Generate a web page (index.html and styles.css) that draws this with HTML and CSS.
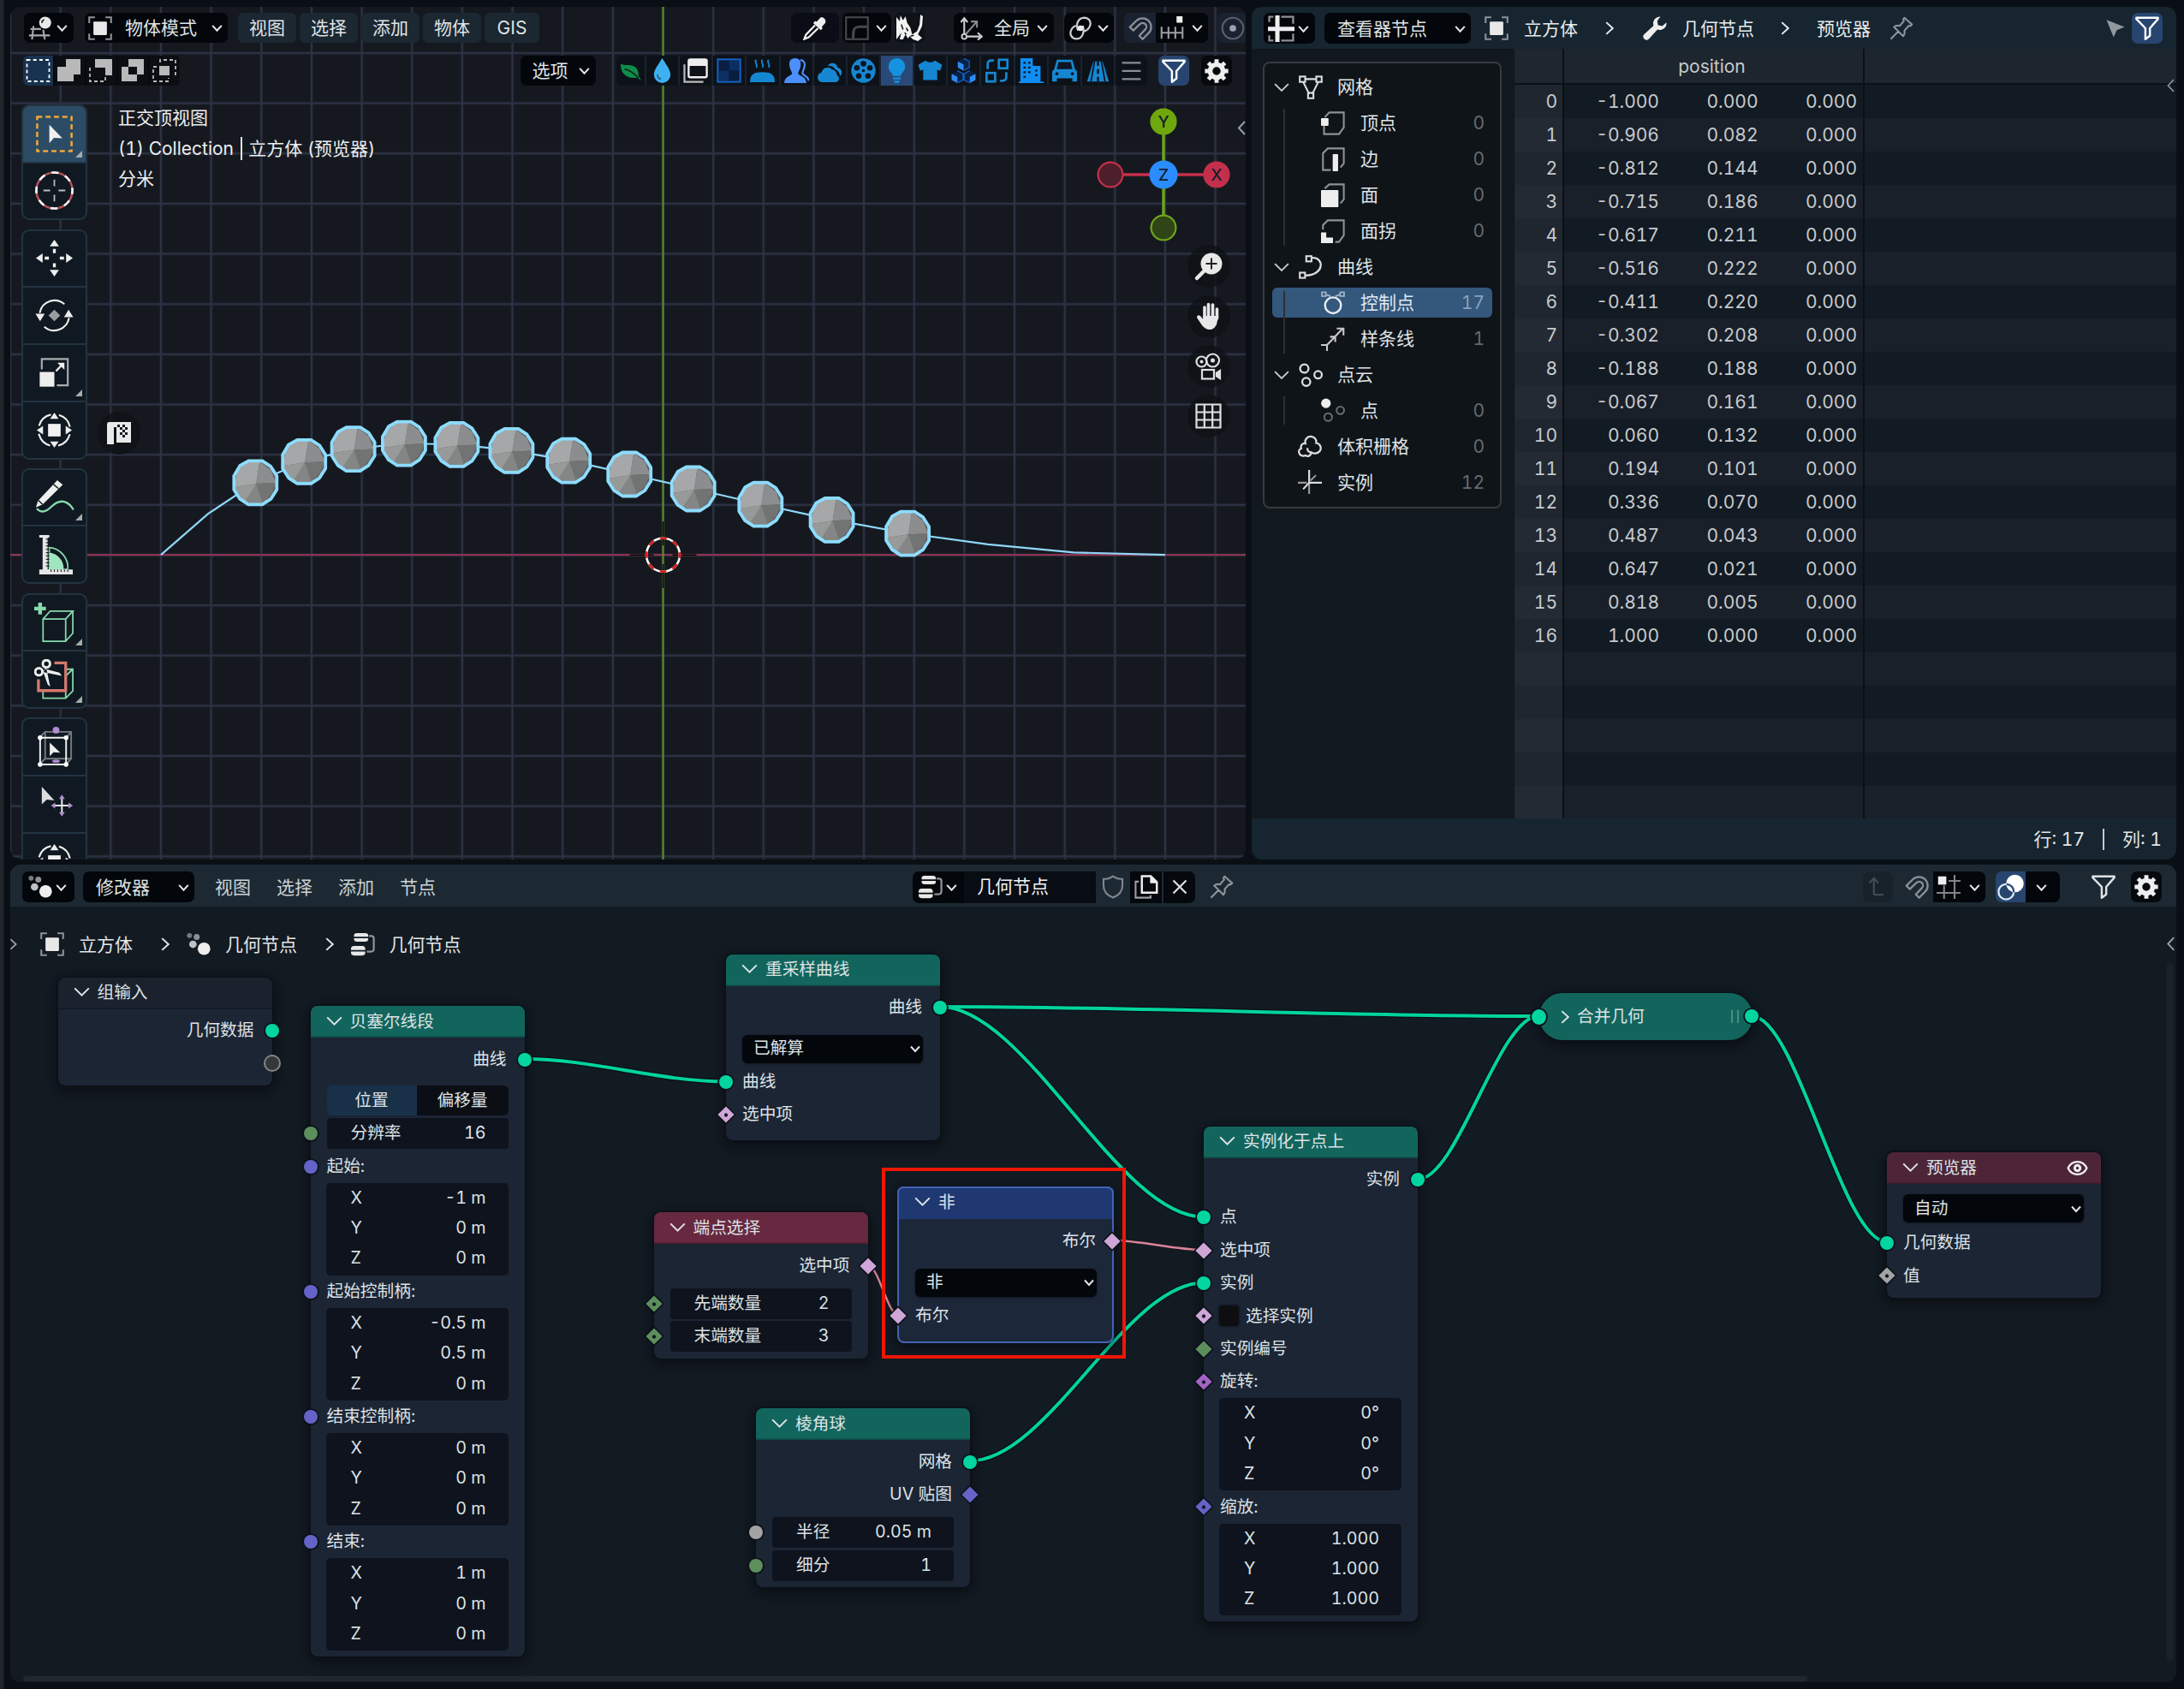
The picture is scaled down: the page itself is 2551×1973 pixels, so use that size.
FILE: index.html
```html
<!DOCTYPE html>
<html lang="zh-CN">
<head>
<meta charset="utf-8">
<title>几何节点</title>
<link rel="stylesheet" href="styles.css">
</head>
<body>
<svg class="defs" width="0" height="0">
  <defs>
    <symbol id="chev" viewBox="0 0 16 16"><path d="M3 5.500 8 11l5-5.500" fill="none" stroke="currentColor" stroke-width="2"/></symbol>
    <symbol id="chev-thin" viewBox="0 0 16 16"><path d="M1 4.500 8 11.500l7-7" fill="none" stroke="currentColor" stroke-width="1.700"/></symbol>
    <symbol id="sep" viewBox="0 0 16 16"><path d="M5 2.500 11 8l-6 5.500" fill="none" stroke="currentColor" stroke-width="1.600"/></symbol>
    <symbol id="obj" viewBox="0 0 16 16"><path d="M.7 4.500V.7h3.800M11.500.7h3.800v3.800M15.300 11.500v3.800h-3.800M4.500 15.300H.7v-3.800" fill="none" stroke="#8d9297" stroke-width="1.200"/><rect x="3.500" y="3.500" width="9" height="9" rx=".6" fill="#e8e8e8"/></symbol>
    <symbol id="ed3d" viewBox="0 0 16 16"><path d="M3.500 6.500 2.500 15.500M10 9l1 6.500M1.500 8.500h7M.5 12.800h14" fill="none" stroke="#a5a9ad" stroke-width="1.200"/><circle cx="11.300" cy="4.300" r="4" fill="#e8e8e8"/><path d="M9.200 4.500a2 2 0 0 1 1.500-2.200" stroke="#222" fill="none"/></symbol>
    <symbol id="edsheet" viewBox="0 0 16 16"><path d="M.8 4V.8h2.500M8 .8h7.200V5M.8 12v3.200h2.500M8 15.200h7.200V11" fill="none" stroke="#8d9297" stroke-width="1.200"/><path d="M4.400 0h2.600v6.800H16v2.600H7V16H4.400V9.400H0V6.800h4.400z" fill="#eee"/></symbol>
    <symbol id="geo" viewBox="0 0 16 16"><circle cx="1.900" cy="2.200" r="1.700" fill="#777b80"/><circle cx="6.700" cy="3.200" r="2" fill="#8d9196"/><circle cx="4.200" cy="8" r="2.500" fill="#bfc2c4"/><circle cx="11.600" cy="11" r="4.200" fill="#eee"/></symbol>
    <symbol id="tree" viewBox="0 0 16 16"><path d="M2 2.200C2 1 2.700.5 4 .5h5.500c1.300 0 2 .5 2 1.700v.8H2zM2 4h9.500v.6c0 1.200-.7 1.700-2 1.700H4c-1.300 0-2-.5-2-1.700z" fill="#e8e8e8"/><path d="M0 11c0-1.200.7-1.900 2-1.900h5.500c1.300 0 2 .7 2 1.900v.8H0zM0 12.800h9.500v.8c0 1.200-.7 1.900-2 1.900H2c-1.300 0-2-.7-2-1.900z" fill="#e8e8e8"/><path d="M12 2.500h1.500c1 0 1.700.6 1.700 1.700v7c0 1-.6 1.700-1.700 1.700H10.500" fill="none" stroke="#8d9297" stroke-width="1.300"/></symbol>
    <symbol id="wrench" viewBox="0 0 16 16"><path d="M11.700.3a4.500 4.500 0 0 0-4.600 6L.9 12a2.100 2.100 0 1 0 3.100 3.100l5.700-6.200a4.500 4.500 0 0 0 6-4.800L12.900 6.500 10 5.900 9.600 3z" fill="#eee"/></symbol>
    <symbol id="pin" viewBox="0 0 16 16"><path d="M10 1l5 4.500-1.200 1-.9-.2L10 9.500c.4 1.600.1 2.800-.9 3.800L3 7.200c1.100-1 2.300-1.200 3.800-.8L9.600 3.200 9.200 2zM5.800 10.200.8 15.300" fill="none" stroke="#8d949b" stroke-width="1.200" stroke-linejoin="round"/></symbol>
    <symbol id="funnel" viewBox="0 0 16 16"><path d="M.8 1h14.400v.8L9.800 8v5l-3 2.300V8L.8 1.800z" fill="none" stroke="currentColor" stroke-width="1.400" stroke-linejoin="round"/></symbol>
    <symbol id="gear" viewBox="0 0 16 16"><circle cx="8" cy="8" r="4.300" fill="none" stroke="#eee" stroke-width="3.200"/><g stroke="#eee" stroke-width="2.800"><path d="M8 .2v3M8 12.800v3M.2 8h3M12.800 8h3M2.500 2.500l2.100 2.100M11.400 11.400l2.100 2.100M2.500 13.500l2.100-2.100M11.400 4.600l2.100-2.100"/></g></symbol>
    <symbol id="magnet" viewBox="0 0 16 16"><path d="M1 7.200 5.300 3a5.700 5.700 0 0 1 8.200 8.200L9.500 15.300 7.300 13l4-4.200A2.400 2.400 0 0 0 7.700 5.200L3.300 9.500z" fill="none" stroke="#8a9097" stroke-width="1.300" stroke-linejoin="round"/></symbol>
    <symbol id="axes" viewBox="0 0 16 16"><path d="M3 12V1.500M.8 4 3 1.200 5.200 4M4.500 13.500H14M12 11l2.700 2.500L12 15.800" fill="none" stroke="#ccc" stroke-width="1.200"/><path d="M4 12l7.500-8.500M7.500 3.500h4v4" fill="none" stroke="#85898d" stroke-width="1.200"/><circle cx="3" cy="13.500" r="1.600" fill="none" stroke="#ccc" stroke-width="1.100"/></symbol>
    <symbol id="pivot" viewBox="0 0 16 16"><path d="M6.500 9.500C4.500 5.500 6.500 1 10.500.9 14 1 15.300 4 14.300 6.500 13.500 8.500 12 9.800 10 10M9.500 6.300C11 10 9.500 15 5.500 15.100 2 15 .7 12 1.700 9.500 2.300 8 3.300 6.800 5 6.300" fill="none" stroke="#ccc" stroke-width="1.300"/><circle cx="8" cy="8" r="1.900" fill="#eee"/></symbol>
    <symbol id="snapinc" viewBox="0 0 16 16"><path d="M1 7v8M5.600 7v8M10.200 7v8M15 7v8M1 11h14" stroke="#9a9ea2" stroke-width="1.200" fill="none"/><rect x="11" y="0" width="4" height="4.300" fill="#eee"/></symbol>
    <symbol id="snapgrid" viewBox="0 0 16 16"><path d="M5 7v9M12 0v16M0 12h16M8 4h8" stroke="#80858a" stroke-width="1.200" fill="none"/><rect x="1" y="1" width="5.500" height="5.500" fill="#eee"/></symbol>
    <symbol id="prop" viewBox="0 0 16 16"><circle cx="8" cy="8" r="7" fill="none" stroke="#59616d" stroke-width="1.200"/><circle cx="8" cy="8" r="2.200" fill="#9aa2b0"/></symbol>
    <symbol id="dropper" viewBox="0 0 16 16"><path d="M11 1.500c1.500-2 5 .5 3.800 3L12.500 7l.6 1-1.300 1.300L6.800 4.500 8 3.200l1 .5z" fill="#eee"/><path d="M8 6 2 12.200.8 15.200l3-1.200L10 8" fill="none" stroke="#eee" stroke-width="1.300"/></symbol>
    <symbol id="falloff" viewBox="0 0 16 16"><rect x=".7" y=".7" width="14.600" height="14.600" fill="none" stroke="#45494d" stroke-width="1.200"/><path d="M5.500 15V12c0-4 1.500-5 4-5H15" fill="none" stroke="#45494d" stroke-width="1.800"/></symbol>
    <symbol id="rhino" viewBox="0 0 16 16"><path d="M0 1.500 2 4 2.500.5l1.500 3L5.500 1l1 4 2 3 1 4 3-2 1.500-4L14.500 0 16 1l-.5 6-2.500 5 2.500 2-2.500 2-3-1-2-2-1 1.500L5.500 12 4 15H2l1-4-3 4z" fill="#f2f2f2"/><path d="M3 6l1 3M6 8l1 2M8.500 13l2-.5M5 11l1 1" stroke="#111" stroke-width=".8"/></symbol>
    <symbol id="shield" viewBox="0 0 16 16"><path d="M8 .9c1.800 1.300 3.900 1.900 6.300 1.900v4.400c0 4-2.300 6.500-6.300 8-4-1.500-6.300-4-6.300-8V2.800C4.100 2.800 6.200 2.200 8 .9z" fill="none" stroke="#7f868e" stroke-width="1.200"/></symbol>
    <symbol id="copy" viewBox="0 0 16 16"><path d="M5 .8h6l4 4v7H5z" fill="none" stroke="#eee" stroke-width="1.400"/><path d="M10.500.5v5H15.500z" fill="#eee"/><path d="M3 4.500H.8v10.700h10V13.500" fill="none" stroke="#9a9ea2" stroke-width="1.200"/></symbol>
    <symbol id="cross" viewBox="0 0 16 16"><path d="M3 3l10 10M13 3 3 13" stroke="#ddd" stroke-width="1.500"/></symbol>
    <symbol id="parent" viewBox="0 0 16 16"><path d="M4.500 1.500V12.500c0 1 .5 1.700 1.700 1.700H12M1 5l3.500-3.800L8 5" fill="none" stroke="#434e58" stroke-width="1.400"/></symbol>
    <symbol id="overlay" viewBox="0 0 16 16"><circle cx="10.600" cy="5.700" r="5.300" fill="#fff"/><circle cx="5.300" cy="10.700" r="4.600" fill="none" stroke="#dfe8f5" stroke-width="1.200"/><path d="M5.600 6.100a4.600 4.600 0 0 1 4.300 4.900" fill="none" stroke="#274a7a" stroke-width="1.200"/></symbol>
    <symbol id="cursor" viewBox="0 0 16 16"><path d="M1 1.500 15 7 9 9.500 6.500 15z" fill="#8f989f"/></symbol>
    <symbol id="mesh" viewBox="0 0 16 16"><path d="M3 4.500 7 12.500M13 4.500 9 12.500M4 2.500h8" fill="none" stroke="#ddd" stroke-width="1.200"/><rect x=".7" y=".8" width="3.600" height="3.600" fill="none" stroke="#ddd" stroke-width="1.200"/><rect x="11.700" y=".8" width="3.600" height="3.600" fill="none" stroke="#ddd" stroke-width="1.200"/><rect x="6.200" y="11.700" width="3.600" height="3.600" fill="none" stroke="#ddd" stroke-width="1.200"/></symbol>
    <symbol id="vert" viewBox="0 0 16 16"><path d="M2.500 4 5.500.8h9.700v10L12 15.200H2V9.500" fill="none" stroke="#8d9195" stroke-width="1.200"/><rect x="0" y="4.500" width="5" height="5.200" rx=".5" fill="#eee"/></symbol>
    <symbol id="edge" viewBox="0 0 16 16"><path d="M6.500 15.200H1.300V4L4.500.8h10.700v10L13 13.500" fill="none" stroke="#8d9195" stroke-width="1.200"/><rect x="7.800" y="4.500" width="3.600" height="11.500" rx=".5" fill="#eee"/></symbol>
    <symbol id="face" viewBox="0 0 16 16"><path d="M2.500 3.500 5.500.8h9.700v10L13 13.500" fill="none" stroke="#8d9195" stroke-width="1.200"/><rect x="0" y="4.500" width="11.600" height="11.500" rx=".6" fill="#eee"/></symbol>
    <symbol id="corner" viewBox="0 0 16 16"><path d="M1.300 7V4L4.500.8h10.700v10L12 15.200H9.500" fill="none" stroke="#8d9195" stroke-width="1.200"/><path d="M0 8.800h3.500v3.500H8V16H0z" fill="#eee"/></symbol>
    <symbol id="curve" viewBox="0 0 16 16"><path d="M9 1.800c8-.5 8.500 11.500-4.500 11.800" fill="none" stroke="#ddd" stroke-width="1.300"/><rect x="5" y=".7" width="3.500" height="3.500" fill="none" stroke="#ddd" stroke-width="1.200"/><rect x=".7" y="11.700" width="3.500" height="3.500" fill="none" stroke="#ddd" stroke-width="1.200"/></symbol>
    <symbol id="cpoint" viewBox="0 0 16 16"><circle cx="8" cy="9.500" r="5.300" fill="none" stroke="#e6ecf2" stroke-width="1.400"/><path d="M3 2.300 6.500 3.500M13 2.300 9.500 3.500" stroke="#9fb3c7" stroke-width="1.200"/><rect x=".6" y=".8" width="2.600" height="2.600" fill="none" stroke="#9fb3c7"/><rect x="12.800" y=".8" width="2.600" height="2.600" fill="none" stroke="#9fb3c7"/></symbol>
    <symbol id="spline" viewBox="0 0 16 16"><path d="M4 12 14.500 1M10.500 1h4.500v4.500M4 16v-4H0M9.500 10V6.500H6" fill="none" stroke="#c8c8c8" stroke-width="1.200"/></symbol>
    <symbol id="cloud3" viewBox="0 0 16 16"><g fill="none" stroke="#ddd" stroke-width="1.300"><circle cx="3.700" cy="3.700" r="2.800"/><circle cx="12.900" cy="7.900" r="2.500"/><circle cx="5" cy="12.600" r="2.700"/></g></symbol>
    <symbol id="point1" viewBox="0 0 16 16"><circle cx="3.300" cy="3.500" r="3.200" fill="#eee"/><g fill="none" stroke="#666b70" stroke-width="1.200"><circle cx="12.900" cy="8.200" r="2.500"/><circle cx="4.800" cy="12.700" r="2.600"/></g></symbol>
    <symbol id="volume" viewBox="0 0 16 16"><path d="M5 6.300A3.700 3.700 0 1 1 12.200 6c3 .5 3.800 3.500 2.300 5.500-1.500 1.700-4 1.800-5.500.8-.5 2.200-2 3-4 2-1.800.7-3.800 0-4.200-1.700-.4-1.500.3-2.700 1.400-3C1.500 7.500 3.200 6 5 6.300zM9 12.300c-2-.3-3-1.500-2.500-3" fill="none" stroke="#ddd" stroke-width="1.300"/></symbol>
    <symbol id="inst" viewBox="0 0 16 16"><path d="M7.500 0v16M0 8.500h6" stroke="#999" stroke-width="1.200" fill="none"/><path d="M7.500 0v8.500H16M3.500 12.800l4-4.300" stroke="#ddd" stroke-width="1.200" fill="none"/><path d="M8.500 7 12 3.500" stroke="#999" stroke-width="1.200"/></symbol>

    <symbol id="leaf" viewBox="0 0 16 16"><path d="M0 2.500c4 2 10-1 13 4.500 1 2 .5 3 1 5l2 3.500-3-2.500C8 14.500-.5 12 0 2.500z" fill="#0d8f47"/><path d="M3 6.500c4 .5 7 3 10.500 6.500" stroke="#11181e" fill="none"/></symbol>
    <symbol id="drop" viewBox="0 0 16 16"><path d="M8 0c3 4.800 5.300 7.500 5.300 10.600A5.300 5.300 0 0 1 8 16a5.300 5.300 0 0 1-5.300-5.400C2.700 7.500 5 4.800 8 0z" fill="#3fb0f2"/><path d="M5 10.500c0 1.800 1 2.800 2.200 3" fill="none" stroke="#1a5f8c"/></symbol>
    <symbol id="window" viewBox="0 0 16 16"><rect x="3.500" y=".8" width="11.700" height="11.500" rx="1" fill="none" stroke="#eee" stroke-width="1.300"/><path d="M3.500 1h11.700v4H3.500z" fill="#eee"/><path d="M.8 4v11.200H13" fill="none" stroke="#bbb" stroke-width="1.200"/></symbol>
    <symbol id="checker" viewBox="0 0 16 16"><rect x=".8" y=".8" width="14.400" height="14.400" fill="#06122b" stroke="#1463c4" stroke-width="1.200"/><path d="M1.500 1.500H8V8H1.500zM8 8h6.500v6.500H8z" fill="#0a1d42"/><path d="M8 1.500h6.500V8H8zM1.500 8H8v6.500H1.500z" fill="#0c2f63"/></symbol>
    <symbol id="steam" viewBox="0 0 16 16"><path d="M0 15.500c0-5 2.500-6.500 8-6.500s8 1.500 8 6.500z" fill="#1587d2"/><path d="M4 1c-1.500 2 1.500 3 0 5M8 1c-1.500 2 1.500 3 0 5M12 1c-1.500 2 1.500 3 0 5" fill="none" stroke="#1587d2" stroke-width="1"/></symbol>
    <symbol id="people" viewBox="0 0 16 16"><path d="M7 0c3 0 4 2 3.600 5C10.200 7.500 9 8.500 9 10c1 1.500 5 1.500 5.300 6H0C.3 11.500 4 11.500 5 10 5 8.500 3.800 7.500 3.400 5 3 2 4 0 7 0z" fill="#4b90fa"/><path d="M10.500 1c2.500.5 3 2.500 2.500 4.500-.3 2-1.300 3-1.200 4.300.7 1.500 3.700 2 4 4.700" fill="none" stroke="#4b90fa" stroke-width="1.200"/></symbol>
    <symbol id="clouds" viewBox="0 0 16 16"><path d="M3 15.500a3.200 3.200 0 0 1-.5-6.300A4 4 0 0 1 9 7a4.500 4.500 0 0 1 3.500 4c2 .8 1.500 4-.5 4.500z" fill="#1587d2"/><path d="M6.500 4.800C8 2.200 12.300 2.600 13 6c2.500.5 3.500 3.500 1.500 5.500-.5-2.500-1.500-3.500-3-4.300C10.500 5.500 8.500 4.700 6.500 4.800z" fill="#1587d2"/></symbol>
    <symbol id="reel" viewBox="0 0 16 16"><circle cx="8" cy="8" r="7.800" fill="#1587d2"/><g fill="#0d1622"><circle cx="8" cy="3.500" r="1.900"/><circle cx="12.200" cy="6.200" r="1.800"/><circle cx="11" cy="11.500" r="1.800"/><circle cx="5" cy="11.500" r="1.800"/><circle cx="3.800" cy="6.200" r="1.800"/><circle cx="8" cy="8" r="1"/></g></symbol>
    <symbol id="bulb" viewBox="0 0 16 16"><path d="M8 0a5.400 5.400 0 0 1 5.400 5.500c0 2.800-2.400 3.500-2.900 6h-5C5 9 2.600 8.300 2.600 5.500A5.400 5.400 0 0 1 8 0zM5.500 12.400h5v1.200h-5zM6 14.500h4l-1 1.500H7z" fill="#1593e0"/></symbol>
    <symbol id="shirt" viewBox="0 0 16 16"><path d="M5 1.500c1.500 1.500 4.500 1.500 6 0l4.700 2.800L14.500 8l-2-.5V14h-9V7.500l-2 .5L.3 4.300z" fill="#1587d2"/></symbol>
    <symbol id="cubes" viewBox="0 0 16 16"><path d="M8 0l3.700 2v4L8 8 4.300 6V2zM4 8l3.700 2v4L4 16 .3 14v-4zM12 8l3.700 2v4L12 16l-3.700-2v-4z" fill="#0a2146"/><path d="M4.300 2 8 4v4L4.300 6zM.3 10 4 12v4L.3 14zM15.700 10 12 12v4l3.700-2z" fill="#2b8cf0"/><path d="M8 0l3.700 2v4L8 8M4 8l3.700 2v4L4 16M12 8 8.300 10v4L12 16" fill="none" stroke="#1463c4" stroke-width=".7"/></symbol>
    <symbol id="swap" viewBox="0 0 16 16"><g fill="none" stroke="#1587d2" stroke-width="1.500"><rect x="9.200" y="1" width="5.500" height="5.500"/><rect x="1.300" y="9.500" width="5.500" height="5.500"/><path d="M2 7V4c0-1.500 1-2.500 2.500-2.500H6M14 9v3c0 1.500-1 2.500-2.500 2.500H10"/></g></symbol>
    <symbol id="build" viewBox="0 0 16 16"><path d="M0 16v-1h1V0h8v5h5v10h2v1z" fill="#0e8df2"/><path d="M3 3h1.500M6 3h1.500M3 6h1.500M6 6h1.500M3 9h1.500M6 9h1.500M3 12h1.500M10.500 8H12M10.500 11H12" stroke="#0d1622" stroke-width="1.200"/></symbol>
    <symbol id="car" viewBox="0 0 16 16"><path d="M3 1h10l1.700 6 1.300 1.500V15h-3v-2H3v2H0V8.500L1.300 7z" fill="#1587d2"/><path d="M4 2.500h8L13 7H3z" fill="#0d1622"/><circle cx="3" cy="10" r="1" fill="#0d1622"/><circle cx="13" cy="10" r="1" fill="#0d1622"/></symbol>
    <symbol id="road" viewBox="0 0 16 16"><path d="M5 2h6l4 13H1z" fill="#1587d2"/><path d="M5.800 2 3.500 15M10.200 2l2.300 13" stroke="#0d1622" stroke-width="1"/><path d="M8 2v3M8 7v3M8 12v3" stroke="#0d1622" stroke-width="1.400"/></symbol>
    <symbol id="lines" viewBox="0 0 16 16"><path d="M2 3h12M2 8.200h12M2 13.400h12" stroke="#888e94" stroke-width="1.200"/></symbol>

    <symbol id="t-sel" viewBox="0 0 48 48"><rect x="3.500" y="3.500" width="41" height="41" fill="none" stroke="#f0a83a" stroke-width="2.600" stroke-dasharray="6 4"/><path d="M18 13v22l5.500-6.500 10 .5z" fill="#f0f0f0"/></symbol>
    <symbol id="t-cur" viewBox="0 0 48 48"><circle cx="24" cy="24" r="21.500" fill="none" stroke="#b5525c" stroke-width="2.600"/><circle cx="24" cy="24" r="21.500" fill="none" stroke="#fff" stroke-width="2.600" stroke-dasharray="8.440 8.440" stroke-dashoffset="4"/><path d="M24 11v8M24 29v8M11 24h8M29 24h8" stroke="#b9bec2" stroke-width="1.800"/></symbol>
    <symbol id="t-move" viewBox="0 0 48 48"><path d="M24 2l5.500 8h-11zM24 46l5.500-8h-11zM2 24l8-5.500v11zM46 24l-8-5.500v11z" fill="#eee"/><path d="M24 13v5M24 30v5M12.500 24h5M30.500 24h5" stroke="#eee" stroke-width="3.400"/></symbol>
    <symbol id="t-rot" viewBox="0 0 48 48"><path d="M6.500 21A18 18 0 0 1 36 10.500M41.500 27A18 18 0 0 1 12 37.500" fill="none" stroke="#eee" stroke-width="2.200"/><path d="M1.500 22h11L7 31zM46.500 26h-11L41 17z" fill="#eee"/><path d="M24 17l7 7-7 7-7-7z" fill="#999da1"/></symbol>
    <symbol id="t-scale" viewBox="0 0 48 48"><path d="M9 20V7.500h31V39H27" fill="none" stroke="#a9adb1" stroke-width="2.200"/><rect x="6.500" y="23" width="17.500" height="17.500" fill="#eee"/><path d="M26 22l6.500-7" stroke="#eee" stroke-width="2.400"/><path d="M27.500 12h8.500v8.500z" fill="#eee"/></symbol>
    <symbol id="t-xform" viewBox="0 0 48 48"><circle cx="24" cy="24" r="19" fill="none" stroke="#eee" stroke-width="2.200" stroke-dasharray="20 9.850" stroke-dashoffset="-5"/><path d="M24 3l5 7.500H19zM24 45l5-7.500H19zM3 24l7.500-5v10zM45 24l-7.500-5v10z" fill="#eee"/><rect x="16.500" y="16.500" width="15" height="15" fill="#f2f2f2"/></symbol>
    <symbol id="t-anno" viewBox="0 0 48 48"><path d="M3 37c6 6 12 3 17-2s12-9 19-5 6 7 8 8" fill="none" stroke="#86d9ac" stroke-width="2.400"/><path d="M27.500 3 34 8.500 10 32 2 35.500 4.500 27.500z" fill="#eee"/><path d="M23 8l6 5M5 27l5 5" stroke="#101a20" stroke-width="1.500"/></symbol>
    <symbol id="t-meas" viewBox="0 0 48 48"><path d="M18 16a24 24 0 0 1 22 26H18z" fill="none" stroke="#86d9ac" stroke-width="1.800"/><path d="M18 22a19 19 0 0 1 17 20H18z" fill="#9fe6be"/><path d="M6 1h12v3h-2v41h-6V4H6z M6 42h40v6H6z" fill="#e6e6e6"/><path d="M14 6h4M14 10h4M14 14h4M14 18h4M14 22h4M14 26h4M14 30h4M14 34h4M14 38h4M20 42v3M24 42v3M28 42v3M32 42v3M36 42v3M40 42v3" stroke="#222" stroke-width="1.200"/></symbol>
    <symbol id="t-add" viewBox="0 0 48 48"><path d="M0 8h14M7 1v14" stroke="#86d9ac" stroke-width="4.500"/><path d="M10.500 20.500h27V47h-27zM10.500 20.500 19 11h27L37.500 20.500M46 11v26.500L37.500 47" fill="none" stroke="#86d9ac" stroke-width="1.800"/></symbol>
    <symbol id="t-cut" viewBox="0 0 48 48"><path d="M38 12h8v26l-8.500 8.500h-27V38M37.500 46.500V20L46 12" fill="none" stroke="#86d9ac" stroke-width="1.800"/><path d="M24 4.500h13.500v33H5V24" fill="none" stroke="#d4786c" stroke-width="3.400"/><g fill="none" stroke="#eee" stroke-width="3"><circle cx="14.500" cy="5.500" r="4.300"/><circle cx="5.500" cy="15" r="4.300"/></g><path d="M14 9l5 24-3-3-5-14zM9 15l24 5-3-4-16-4z" fill="#eee"/></symbol>
    <symbol id="t-cage" viewBox="0 0 48 48"><path d="M13 6h31v32H13zM6 13l7-7M38 13l6-7M38 45l6-7M6 45l7-7" fill="none" stroke="#74797f" stroke-width="2"/><path d="M7 13h31v32H7z" fill="none" stroke="#f0f0f0" stroke-width="2"/><g fill="#fff"><circle cx="7" cy="13" r="2.800"/><circle cx="38" cy="13" r="2.800"/><circle cx="7" cy="45" r="2.800"/><circle cx="38" cy="45" r="2.800"/></g><circle cx="26" cy="4" r="4" fill="#b08bd0"/><ellipse cx="26" cy="41" rx="4.500" ry="2" fill="#b08bd0"/><path d="M18.500 19v16l4.500-4.500 8 .5z" fill="#eee"/></symbol>
    <symbol id="t-tweak" viewBox="0 0 48 48"><path d="M9 3v21l6-5.500 9 1z" fill="#ddd"/><path d="M33 17v17M24.500 25.500h17" stroke="#eee" stroke-width="2"/><path d="M33 12.500l3.500 5h-7zM33 38.500l3.500-5h-7zM20 25.500l5-3.500v7zM46 25.500l-5-3.500v7z" fill="#b08bd0"/></symbol>

    <symbol id="ball" viewBox="-28 -28 56 56">
      <path d="M-25-8-18-20-8-25.500 8-25.500 18-19 25-8 25 8 18 19 8 25.500-8 25.500-18 19-25 8z" fill="#5b5b5b"/>
      <path d="M5-25-11-24-21-15-25 5 1 1z" fill="#a5a7a8"/>
      <path d="M5-25 18-15 24 0 1 1z" fill="#8c8d8e"/>
      <path d="M24 0 19 13 9 24 1 1z" fill="#727373"/>
      <path d="M-25 5-16 19-10 23 1 1z" fill="#989a9a"/>
      <path d="M-12 21-4 25 9 24 1 1z" fill="#848685"/>
      <path d="M-25-8-18-20-8-25.500 8-25.500 18-19 25-8 25 8 18 19 8 25.500-8 25.500-18 19-25 8z" fill="none" stroke="#8ddcff" stroke-width="3.800" stroke-linejoin="round"/>
    </symbol>
    <pattern id="grid" x="12.030" y="3.300" width="58.650" height="58.650" patternUnits="userSpaceOnUse"><path d="M0 .1V58.650M0 .1H58.650M58.650 0V58.650M0 58.650H58.650" stroke="#2c3144" stroke-width="2.400" fill="none"/></pattern>
  </defs>
</svg>

<main class="app">
  <section class="panel viewport">
    <svg class="scene" viewBox="12 8 1443 996">
      <rect x="12" y="8" width="1443" height="996" fill="url(#grid)"/>
      <path d="M12 648.200H1455" stroke="#8c3450" stroke-width="2.200"/>
      <path d="M774.500 8V1004" stroke="#5c8a2c" stroke-width="2.200"/>
      <path d="M188 648.200 243.100 600.100 298.300 563.700 355.200 539.100 412.600 524.400 471.900 518 533.400 519.200 597.400 526.200 664.200 537.900 735.200 553.800 809.700 570.800 888.300 589 971.600 607.100 1060.100 623 1154 635.900 1254.300 645.300 1361 648.200" fill="none" stroke="#8fd8fa" stroke-width="2.200"/>
      <g>
        <use href="#ball" x="270.300" y="535.900" width="56" height="56"/>
        <use href="#ball" x="327.200" y="511.300" width="56" height="56"/>
        <use href="#ball" x="384.600" y="496.600" width="56" height="56"/>
        <use href="#ball" x="443.900" y="490.200" width="56" height="56"/>
        <use href="#ball" x="505.400" y="491.400" width="56" height="56"/>
        <use href="#ball" x="569.400" y="498.400" width="56" height="56"/>
        <use href="#ball" x="636.200" y="510.100" width="56" height="56"/>
        <use href="#ball" x="707.200" y="526" width="56" height="56"/>
        <use href="#ball" x="781.700" y="543" width="56" height="56"/>
        <use href="#ball" x="860.300" y="561.200" width="56" height="56"/>
        <use href="#ball" x="943.600" y="579.300" width="56" height="56"/>
        <use href="#ball" x="1032.100" y="595.200" width="56" height="56"/>
      </g>
      <path d="M774.500 609v28M774.500 659v28M735.500 648.200h28M785.500 648.200h28" stroke="#050505" stroke-width="1.600"/>
      <circle cx="774.500" cy="648.200" r="19.500" fill="none" stroke="#fff" stroke-width="2.600"/>
      <circle cx="774.500" cy="648.200" r="19.500" fill="none" stroke="#e01818" stroke-width="2.600" stroke-dasharray="7.660 7.660" stroke-dashoffset="4"/>
      <g stroke-width="3.400">
        <path d="M1359 142V266" stroke="#6fa51a"/>
        <path d="M1297 204H1421" stroke="#c42f4b"/>
        <circle cx="1297" cy="204" r="14.400" fill="#4c1f2a" stroke="#c42f4b" stroke-width="2.200"/>
        <circle cx="1359" cy="266" r="14.400" fill="#304517" stroke="#6fa51a" stroke-width="2.200"/>
        <circle cx="1359" cy="142" r="15.600" fill="#6fa80c"/>
        <circle cx="1421" cy="204" r="15.600" fill="#c42f4b"/>
        <circle cx="1359" cy="204" r="16.600" fill="#2b8cff"/>
      </g>
      <g class="axis"><text x="1359" y="149">Y</text><text x="1359" y="211">Z</text><text x="1421" y="211">X</text></g>
      <path d="M1454 142 1447 149.500 1454 157" fill="none" stroke="#9a9fa4" stroke-width="2"/>
      <g fill="#0d1015" opacity=".75"><circle cx="1412" cy="311" r="25"/><circle cx="1412" cy="370" r="25"/><circle cx="1412" cy="428" r="25"/><circle cx="1412" cy="486" r="25"/><circle cx="139" cy="506" r="25"/></g>
      <circle cx="1415" cy="308" r="12.500" fill="#e8e8e8"/><path d="M1406 317 1398 325" stroke="#e8e8e8" stroke-width="4.500" stroke-linecap="round"/><path d="M1415 301.500v13M1408.500 308h13" stroke="#222" stroke-width="2"/>
      <path d="M1407 372V359M1411.500 370V355.500M1416.500 370V356M1421.500 372V361" stroke="#e8e8e8" stroke-width="3.600" stroke-linecap="round"/><path d="M1405.200 369H1423.300L1421 379Q1418 385 1413 385 1408 385 1404 380L1398 371Q1398 367 1402 369L1405.200 373Z" fill="#e8e8e8"/>
      <g fill="none" stroke="#e0e0e0" stroke-width="2.200"><circle cx="1403.500" cy="422.500" r="6"/><circle cx="1416.500" cy="421" r="7.500"/><rect x="1404" y="432" width="14" height="10.500"/><path d="M1425 433v9l-4-2.500v-4z" fill="#e0e0e0"/></g><circle cx="1403.500" cy="422.500" r="2" fill="#e0e0e0"/><circle cx="1416.500" cy="421" r="2.500" fill="#e0e0e0"/>
      <path d="M1397.500 472.500h28v27h-28zM1406.800 472.500v27M1416.200 472.500v27M1397.500 481.500h28M1397.500 490.500h28" fill="#14181d" stroke="#e0e0e0" stroke-width="2.200"/>
      <path d="M127 493h26v24h-17v-18h-3v20h-8v-22q0-4 2-4z" fill="#e8e8e8"/><path d="M137 496h3v3h-3zM143 496h3v3h-3zM140 499h3v3h-3zM146 499h3v3h-3zM143 502h3v3h-3zM140 505h3v3h-3zM146 505h3v3h-3zM143 508h3v3h-3z" fill="#15191e"/>
    </svg>

    <header class="vp-row">
      <div class="btn ed-type"><svg class="i28"><use href="#ed3d"/></svg><svg class="cv"><use href="#chev"/></svg></div>
      <div class="btn mode"><svg class="i28"><use href="#obj"/></svg><span>物体模式</span><svg class="cv"><use href="#chev"/></svg></div>
      <nav class="vp-menu"><span>视图</span><span>选择</span><span>添加</span><span>物体</span><span class="gis">GIS</span></nav>
      <div class="btn picker"><svg class="i28"><use href="#dropper"/></svg></div>
      <div class="btn fall"><svg class="i28"><use href="#falloff"/></svg><svg class="cv"><use href="#chev"/></svg></div>
      <div class="btn rhino"><svg class="i30"><use href="#rhino"/></svg></div>
      <div class="btn orient"><svg class="i28"><use href="#axes"/></svg><span>全局</span><svg class="cv"><use href="#chev"/></svg></div>
      <div class="btn piv"><svg class="i28"><use href="#pivot"/></svg><svg class="cv"><use href="#chev"/></svg></div>
      <div class="btn mag"><svg class="i28"><use href="#magnet"/></svg></div>
      <div class="btn snp"><svg class="i28"><use href="#snapinc"/></svg><svg class="cv"><use href="#chev"/></svg></div>
      <div class="btn prp"><svg class="i28"><use href="#prop"/></svg></div>
    </header>
    <div class="vp-row second">
      <div class="modes">
        <svg class="on" viewBox="0 0 35 35"><rect x="4.500" y="5" width="26" height="25" fill="none" stroke="#fff" stroke-width="1.800" stroke-dasharray="4 3.200"/></svg>
        <svg viewBox="0 0 35 35"><path d="M13 4h17v18h-8v8H3V13h10z" fill="#b9b9b9"/></svg>
        <svg viewBox="0 0 35 35"><path d="M10 4h20v19h-8v-9H10z" fill="#b9b9b9"/><path d="M4 14v16h18v-6" fill="none" stroke="#b9b9b9" stroke-width="1.800" stroke-dasharray="4 3"/></svg>
        <svg viewBox="0 0 35 35"><path d="M12 4h18v18h-8v8H4V13h8zM12 13v9h10v-9z" fill="#b9b9b9" fill-rule="evenodd"/></svg>
        <svg viewBox="0 0 35 35"><path d="M12 8V5h18v17h-4M8 13H4v17h18v-4" fill="none" stroke="#b9b9b9" stroke-width="1.800" stroke-dasharray="4 3"/><rect x="11" y="12" width="12" height="11" fill="#b9b9b9"/></svg>
      </div>
      <div class="btn options"><span>选项</span><svg class="cv"><use href="#chev"/></svg></div>
      <div class="strip">
        <i><svg><use href="#leaf"/></svg></i><i><svg><use href="#drop"/></svg></i><i><svg><use href="#window"/></svg></i><i><svg><use href="#checker"/></svg></i><i><svg><use href="#steam"/></svg></i><i><svg><use href="#people"/></svg></i><i><svg><use href="#clouds"/></svg></i><i><svg><use href="#reel"/></svg></i><i class="on"><svg><use href="#bulb"/></svg></i><i><svg><use href="#shirt"/></svg></i><i><svg><use href="#cubes"/></svg></i><i><svg><use href="#swap"/></svg></i><i><svg><use href="#build"/></svg></i><i><svg><use href="#car"/></svg></i><i><svg><use href="#road"/></svg></i><i><svg><use href="#lines"/></svg></i>
      </div>
      <div class="btn sq blue"><svg class="i28"><use href="#funnel"/></svg></div>
      <div class="btn sq dark"><svg class="i28"><use href="#gear"/></svg></div>
    </div>
    <div class="vp-body">
      <aside class="tools">
        <div class="tg"><b class="on more"><svg><use href="#t-sel"/></svg></b><b><svg><use href="#t-cur"/></svg></b></div>
        <div class="tg"><b><svg><use href="#t-move"/></svg></b><b><svg><use href="#t-rot"/></svg></b><b class="more"><svg><use href="#t-scale"/></svg></b><b><svg><use href="#t-xform"/></svg></b></div>
        <div class="tg"><b class="more"><svg><use href="#t-anno"/></svg></b><b><svg><use href="#t-meas"/></svg></b></div>
        <div class="tg"><b class="more"><svg><use href="#t-add"/></svg></b><b class="more"><svg><use href="#t-cut"/></svg></b></div>
        <div class="tg"><b><svg><use href="#t-cage"/></svg></b><b><svg><use href="#t-tweak"/></svg></b><b><svg><use href="#t-xform"/></svg></b></div>
      </aside>
      <div class="info"><p>正交顶视图</p><p>(1) Collection <em></em> 立方体 (预览器)</p><p>分米</p></div>
    </div>
  </section>

  <section class="panel sheet">
    <header class="sh-head">
      <div class="btn sh-type"><svg class="i30"><use href="#edsheet"/></svg><svg class="cv"><use href="#chev"/></svg></div>
      <div class="btn sh-mode"><span>查看器节点</span><svg class="cv"><use href="#chev"/></svg></div>
      <div class="crumbs">
        <svg class="i28 c-obj"><use href="#obj"/></svg><span class="c-a">立方体</span><svg class="i20 c-s"><use href="#sep"/></svg><svg class="i28"><use href="#wrench"/></svg><span class="c-b">几何节点</span><svg class="i20 c-s"><use href="#sep"/></svg><span class="c-c">预览器</span><svg class="i28"><use href="#pin"/></svg>
      </div>
      <svg class="i24 c-cur"><use href="#cursor"/></svg>
      <div class="btn sq blue"><svg class="i28"><use href="#funnel"/></svg></div>
    </header>
    <div class="sh-main">
      <aside class="side">
        <div class="tree">
          <div class="tr"><svg class="tc"><use href="#chev-thin"/></svg><svg class="i28"><use href="#mesh"/></svg><span>网格</span></div>
          <div class="kids">
            <div class="tr"><svg class="i28"><use href="#vert"/></svg><span>顶点</span><u>0</u></div>
            <div class="tr"><svg class="i28"><use href="#edge"/></svg><span>边</span><u>0</u></div>
            <div class="tr"><svg class="i28"><use href="#face"/></svg><span>面</span><u>0</u></div>
            <div class="tr"><svg class="i28"><use href="#corner"/></svg><span>面拐</span><u>0</u></div>
          </div>
          <div class="tr"><svg class="tc"><use href="#chev-thin"/></svg><svg class="i28"><use href="#curve"/></svg><span>曲线</span></div>
          <div class="kids">
            <div class="tr sel"><svg class="i28"><use href="#cpoint"/></svg><span>控制点</span><u>17</u></div>
            <div class="tr"><svg class="i28"><use href="#spline"/></svg><span>样条线</span><u>1</u></div>
          </div>
          <div class="tr"><svg class="tc"><use href="#chev-thin"/></svg><svg class="i28"><use href="#cloud3"/></svg><span>点云</span></div>
          <div class="kids">
            <div class="tr"><svg class="i28"><use href="#point1"/></svg><span>点</span><u>0</u></div>
          </div>
          <div class="tr leaf"><svg class="i28"><use href="#volume"/></svg><span>体积栅格</span><u>0</u></div>
          <div class="tr leaf"><svg class="i28"><use href="#inst"/></svg><span>实例</span><u>12</u></div>
        </div>
      </aside>
      <div class="table">
        <div class="th"><span class="ix"></span><span class="vals">position</span></div>
        <div class="td"><span class="ix">0</span><span class="vals"><s>-1.000</s><s>0.000</s><s>0.000</s></span></div>
        <div class="td"><span class="ix">1</span><span class="vals"><s>-0.906</s><s>0.082</s><s>0.000</s></span></div>
        <div class="td"><span class="ix">2</span><span class="vals"><s>-0.812</s><s>0.144</s><s>0.000</s></span></div>
        <div class="td"><span class="ix">3</span><span class="vals"><s>-0.715</s><s>0.186</s><s>0.000</s></span></div>
        <div class="td"><span class="ix">4</span><span class="vals"><s>-0.617</s><s>0.211</s><s>0.000</s></span></div>
        <div class="td"><span class="ix">5</span><span class="vals"><s>-0.516</s><s>0.222</s><s>0.000</s></span></div>
        <div class="td"><span class="ix">6</span><span class="vals"><s>-0.411</s><s>0.220</s><s>0.000</s></span></div>
        <div class="td"><span class="ix">7</span><span class="vals"><s>-0.302</s><s>0.208</s><s>0.000</s></span></div>
        <div class="td"><span class="ix">8</span><span class="vals"><s>-0.188</s><s>0.188</s><s>0.000</s></span></div>
        <div class="td"><span class="ix">9</span><span class="vals"><s>-0.067</s><s>0.161</s><s>0.000</s></span></div>
        <div class="td"><span class="ix">10</span><span class="vals"><s>0.060</s><s>0.132</s><s>0.000</s></span></div>
        <div class="td"><span class="ix">11</span><span class="vals"><s>0.194</s><s>0.101</s><s>0.000</s></span></div>
        <div class="td"><span class="ix">12</span><span class="vals"><s>0.336</s><s>0.070</s><s>0.000</s></span></div>
        <div class="td"><span class="ix">13</span><span class="vals"><s>0.487</s><s>0.043</s><s>0.000</s></span></div>
        <div class="td"><span class="ix">14</span><span class="vals"><s>0.647</s><s>0.021</s><s>0.000</s></span></div>
        <div class="td"><span class="ix">15</span><span class="vals"><s>0.818</s><s>0.005</s><s>0.000</s></span></div>
        <div class="td"><span class="ix">16</span><span class="vals"><s>1.000</s><s>0.000</s><s>0.000</s></span></div>
        <div class="td"><span class="ix"></span><span class="vals"></span></div>
        <div class="td"><span class="ix"></span><span class="vals"></span></div>
        <div class="td"><span class="ix"></span><span class="vals"></span></div>
        <div class="td"><span class="ix"></span><span class="vals"></span></div>
        <div class="td"><span class="ix"></span><span class="vals"></span></div>
        <svg class="fold" viewBox="0 0 8 16"><path d="M7.500 1 1 8l6.500 7" fill="none" stroke="#8a9096" stroke-width="1.800"/></svg>
      </div>
    </div>
    <footer class="sh-foot"><span>行: 17</span><em></em><span>列: 1</span></footer>
  </section>

  <section class="panel nodes">
    <header class="ne-head">
      <div class="btn ne-type"><svg class="i28"><use href="#geo"/></svg><svg class="cv"><use href="#chev"/></svg></div>
      <div class="btn ne-mode"><span>修改器</span><svg class="cv"><use href="#chev"/></svg></div>
      <nav class="ne-menu"><span>视图</span><span>选择</span><span>添加</span><span>节点</span></nav>
      <div class="idblock">
        <div class="btn id-type"><svg class="i28"><use href="#tree"/></svg><svg class="cv"><use href="#chev"/></svg></div>
        <div class="id-name">几何节点</div>
        <div class="id-fake"><svg class="i28"><use href="#shield"/></svg></div>
        <div class="id-btn"><svg class="i28"><use href="#copy"/></svg></div>
        <div class="id-btn last"><svg class="i24"><use href="#cross"/></svg></div>
      </div>
      <svg class="i28 ne-pin"><use href="#pin"/></svg>
      <div class="btn up"><svg class="i24"><use href="#parent"/></svg></div>
      <svg class="i28 ne-mag"><use href="#magnet"/></svg>
      <div class="btn ne-snap"><svg class="i28"><use href="#snapgrid"/></svg><svg class="cv"><use href="#chev"/></svg></div>
      <div class="btn ne-over"><svg class="i30"><use href="#overlay"/></svg></div>
      <div class="btn ne-drop"><svg class="cv"><use href="#chev"/></svg></div>
      <svg class="i28 ne-fun"><use href="#funnel"/></svg>
      <div class="btn sq dark"><svg class="i28"><use href="#gear"/></svg></div>
    </header>
    <div class="ne-crumbs">
      <svg class="n-edge"><use href="#sep"/></svg><svg class="i28 n-o"><use href="#obj"/></svg><span class="n-a">立方体</span><svg class="i20 n-s"><use href="#sep"/></svg><svg class="i28"><use href="#geo"/></svg><span class="n-b">几何节点</span><svg class="i20 n-s"><use href="#sep"/></svg><svg class="i28"><use href="#tree"/></svg><span class="n-b">几何节点</span>
    </div>

    <div class="canvas">
      <svg class="links" viewBox="12 1010 2530 955">
        <defs>
          <path id="l1" d="M613 1237C691 1237 770 1263.500 848 1263.500"/>
          <path id="l2" d="M1098 1176C1331 1176 1564 1187 1797 1187"/>
          <path id="l3" d="M1098 1176C1198 1176 1306 1421.600 1406 1421.600"/>
          <path id="l4" d="M1133 1706.500C1224 1706.500 1315 1498.400 1406 1498.400"/>
          <path id="l5" d="M1656 1377.500C1703 1377.500 1750 1187 1797 1187"/>
          <path id="l6" d="M2046 1187C2099 1187 2151 1450.600 2204 1450.600"/>
        </defs>
        <g fill="none" stroke="#0a1016" stroke-width="6.500"><use href="#l1"/><use href="#l2"/><use href="#l3"/><use href="#l4"/><use href="#l5"/><use href="#l6"/></g>
        <g fill="none" stroke="#02d39d" stroke-width="4"><use href="#l1"/><use href="#l2"/><use href="#l3"/><use href="#l4"/><use href="#l5"/><use href="#l6"/></g>
        <g fill="none" stroke="#dc8398" stroke-width="2.400"><path d="M1299 1449C1335 1449 1370 1460 1406 1460"/><path d="M1014 1478.500C1026 1478.500 1037 1536 1049 1536"/></g>
      </svg>

      <article class="node n-input"><h3><svg><use href="#chev-thin"/></svg>组输入</h3>
        <div class="row out">几何数据<i class="c geo"></i></div><div class="row out"><i class="c virt"></i></div></article>

      <article class="node green n-bezier"><h3><svg><use href="#chev-thin"/></svg>贝塞尔线段</h3>
        <div class="row out">曲线<i class="c geo"></i></div>
        <div class="row toggle g10"><span class="on">位置</span><span>偏移量</span></div>
        <div class="row"><i class="c int"></i><div class="field"><span>分辨率</span><span>16</span></div></div>
        <div class="row">起始:<i class="c vec"></i></div>
        <div class="vector"><p><span>X</span><span>-1 m</span></p><p><span>Y</span><span>0 m</span></p><p><span>Z</span><span>0 m</span></p></div>
        <div class="row">起始控制柄:<i class="c vec"></i></div>
        <div class="vector"><p><span>X</span><span>-0.5 m</span></p><p><span>Y</span><span>0.5 m</span></p><p><span>Z</span><span>0 m</span></p></div>
        <div class="row">结束控制柄:<i class="c vec"></i></div>
        <div class="vector"><p><span>X</span><span>0 m</span></p><p><span>Y</span><span>0 m</span></p><p><span>Z</span><span>0 m</span></p></div>
        <div class="row">结束:<i class="c vec"></i></div>
        <div class="vector"><p><span>X</span><span>1 m</span></p><p><span>Y</span><span>0 m</span></p><p><span>Z</span><span>0 m</span></p></div>
      </article>

      <article class="node green n-resample"><h3><svg><use href="#chev-thin"/></svg>重采样曲线</h3>
        <div class="row out">曲线<i class="c geo"></i></div>
        <div class="row g10"><div class="drop">已解算<svg class="cv"><use href="#chev"/></svg></div></div>
        <div class="row">曲线<i class="c geo"></i></div>
        <div class="row">选中项<i class="d bool dot"></i></div></article>

      <article class="node red n-endpoint"><h3><svg><use href="#chev-thin"/></svg>端点选择</h3>
        <div class="row out">选中项<i class="d bool"></i></div>
        <div class="row g6"><i class="d int dot"></i><div class="field"><span>先端数量</span><span>2</span></div></div>
        <div class="row"><i class="d int dot"></i><div class="field"><span>末端数量</span><span>3</span></div></div></article>

      <article class="node blue n-not"><h3><svg><use href="#chev-thin"/></svg>非</h3>
        <div class="row out">布尔<i class="d bool"></i></div>
        <div class="row g10"><div class="drop">非<svg class="cv"><use href="#chev"/></svg></div></div>
        <div class="row">布尔<i class="d bool"></i></div></article>

      <article class="node green n-ico"><h3><svg><use href="#chev-thin"/></svg>棱角球</h3>
        <div class="row out">网格<i class="c geo"></i></div>
        <div class="row out">UV 贴图<i class="d vec"></i></div>
        <div class="row g6"><i class="c flt"></i><div class="field"><span>半径</span><span>0.05 m</span></div></div>
        <div class="row"><i class="c int"></i><div class="field"><span>细分</span><span>1</span></div></div></article>

      <article class="node green n-inst"><h3><svg><use href="#chev-thin"/></svg>实例化于点上</h3>
        <div class="row out">实例<i class="c geo"></i></div>
        <div class="row g6">点<i class="c geo"></i></div>
        <div class="row">选中项<i class="d bool"></i></div>
        <div class="row">实例<i class="c geo"></i></div>
        <div class="row"><i class="d bool dot"></i><b class="check"></b>选择实例</div>
        <div class="row">实例编号<i class="d int"></i></div>
        <div class="row">旋转:<i class="d rot dot"></i></div>
        <div class="vector"><p><span>X</span><span>0°</span></p><p><span>Y</span><span>0°</span></p><p><span>Z</span><span>0°</span></p></div>
        <div class="row">缩放:<i class="d vec dot"></i></div>
        <div class="vector"><p><span>X</span><span>1.000</span></p><p><span>Y</span><span>1.000</span></p><p><span>Z</span><span>1.000</span></p></div>
      </article>

      <article class="node n-join"><svg><use href="#sep"/></svg>合并几何<em></em><i class="c geo l"></i><i class="c geo r"></i></article>

      <article class="node wine n-viewer"><h3><svg><use href="#chev-thin"/></svg>预览器<svg class="eye" viewBox="0 0 24 18"><path d="M1.500 9C6-.5 18-.5 22.500 9 18 18.500 6 18.500 1.500 9z" fill="none" stroke="#eee" stroke-width="2.200"/><circle cx="12" cy="9" r="4.500" fill="#eee"/><circle cx="12" cy="9" r="1.600" fill="#4e2538"/></svg></h3>
        <div class="row g4"><div class="drop">自动<svg class="cv"><use href="#chev"/></svg></div></div>
        <div class="row">几何数据<i class="c geo"></i></div>
        <div class="row">值<i class="d flt dot"></i></div></article>

      <div class="mark"></div>
      <svg class="fold2" viewBox="0 0 8 16"><path d="M7.500 1 1 8l6.500 7" fill="none" stroke="#9a9fa4" stroke-width="1.800"/></svg>
      <div class="vbar"></div>
      <div class="hbar"></div>
    </div>
  </section>
</main>
</body>
</html>
```

FILE: styles.css
```css
* { box-sizing: border-box; }
body {
  margin: 0;
  background: linear-gradient(90deg, #20252c 0 4px, #0a0f15 5px);
  color: #dfe3e6;
  font: 21px/1 Inter, "Noto Sans CJK SC", sans-serif;
  font-variant-numeric: tabular-nums;
  overflow: hidden;
}
svg { display: block; flex: none; }
.defs { position: absolute; }
p, h3 { margin: 0; font-weight: 400; }
i, em { font-style: normal; }
u, s { text-decoration: none; }

.app {
  display: grid;
  grid-template: 996px 955px / 1443px 1080px;
  gap: 6px 7px;
  width: 2551px;
  height: 1973px;
  padding: 8px 9px 8px 12px;
}
.panel { position: relative; overflow: hidden; border-radius: 12px; display: flex; flex-direction: column; }
.i20 { width: 20px; height: 20px; }
.i24 { width: 24px; height: 24px; }
.i28 { width: 28px; height: 28px; }
.i30 { width: 31px; height: 31px; }
.cv { width: 17px; height: 17px; color: #e4e4e4; }

.btn {
  display: flex;
  align-items: center;
  justify-content: center;
  height: 36px;
  border-radius: 7px;
  background: #03060a;
  flex: none;
}
.btn span { white-space: nowrap; }
.sq { width: 36px; }
.sq.blue { background: #27456f; color: #fff; }
.sq.dark { background: #06090e; }

/* 3D viewport */
.viewport { background: #15191f; }
.scene { position: absolute; inset: 0; width: 1443px; height: 996px; }
.axis text { font: 500 19px Inter, sans-serif; text-anchor: middle; fill: #15202a; }
.vp-row { position: relative; display: flex; height: 35px; margin-top: 7px; padding-left: 16px; }
.vp-row .btn { height: 35px; }
.vp-row.second { margin-top: 15px; padding-left: 15px; }
.ed-type { width: 58px; gap: 3px; }
.mode { width: 167px; margin-left: 13px; gap: 15px; }
.vp-menu { display: flex; gap: 4px; margin-left: 12px; }
.vp-menu span { width: 68px; height: 35px; line-height: 35px; text-align: center; border-radius: 6px; background: #1b2731; }
.vp-menu .gis { width: 64px; }
.picker { width: 56px; margin-left: 294px; background: #0a0d16; }
.fall { width: 57px; margin-left: 4px; gap: 6px; }
.rhino { width: 35px; margin-left: 4px; background: #0d1118; }
.orient { width: 117px; margin-left: 34px; gap: 12px; }
.orient .cv { margin-left: -6px; margin-right: -2px; }
.piv { width: 58px; margin-left: 12px; gap: 4px; }
.mag { width: 37px; margin-left: 12px; background: #1a2230; border-radius: 7px 0 0 7px; }
.snp { width: 61px; gap: 7px; border-radius: 0 7px 7px 0; }
.prp { width: 36px; margin-left: 11px; background: #1a2230; }
.modes { display: flex; width: 183px; background: #07090c; border-radius: 6px; gap: 2px; overflow: hidden; }
.modes svg { width: 35px; height: 35px; background: #0b0e12; }
.modes .on { background: #183350; }
.options { width: 88px; margin-left: 398px; gap: 10px; padding-left: 8px; }
.strip { display: flex; width: 620px; margin-left: 24px; border-radius: 6px; overflow: hidden; background: #1a2230; gap: 2px; }
.strip i { flex: 1; display: flex; align-items: center; justify-content: center; background: #0d1219; }
.strip i:first-child { flex: 0 0 33px; }
.strip i svg { width: 29px; height: 29px; }
.strip .on { background: #294a78; }
.strip i:first-child svg { width: 24px; height: 24px; }
.second .blue { margin-left: 13px; }
.second .dark { margin-left: 14px; }
.vp-body { position: relative; display: flex; align-items: flex-start; margin-top: 22px; padding-left: 13px; }
.tools { display: flex; flex-direction: column; gap: 10.400px; width: 77px; }
.tg { border: 2px solid #223341; border-radius: 9px; overflow: hidden; background: #101921; }
.tg b { position: relative; display: flex; align-items: center; justify-content: center; height: 64.500px; }
.tg b + b { height: 66.800px; border-top: 2px solid #223341; }
.tg b svg { width: 47px; height: 47px; }
.tg .on { background: #2c4c66; }
.tg .more::after { content: ""; position: absolute; right: 4px; bottom: 5px; border: 4px solid transparent; border-right-color: #a7abae; border-bottom-color: #a7abae; }
.info { margin-left: 36px; margin-top: -2px; line-height: 35.500px; color: #eceef0; }
.info em { display: inline-block; width: 2px; height: 27px; background: #dfe3e6; vertical-align: -6px; margin: 0 2px; }

/* spreadsheet */
.sheet { background: #11181e; }
.sh-head { display: flex; align-items: center; height: 49px; padding-left: 14px; padding-top: 1px; background: #16252f; flex: none; }
.sh-type { width: 60px; gap: 2px; }
.sh-mode { width: 171px; margin-left: 11px; justify-content: space-between; padding: 0 4px 0 15px; }
.crumbs { display: flex; align-items: center; color: #e8ebed; white-space: nowrap; }
.c-obj { margin-left: 16px; }
.c-a { margin-left: 18px; width: 63px; }
.c-s { margin: 0 28px 0 27px; }
.crumbs .c-s + .i28 { margin-left: 1px; }
.c-b { margin-left: 18px; width: 83px; }
.c-c { margin-right: 22px; width: 63px; margin-left: -1px; }
.c-cur { margin-left: 224px; }
.sh-head .blue { margin-left: 7px; }
.sh-main { display: flex; flex: 1; min-height: 0; }
.side { width: 307px; padding: 15px 15px 0 13px; }
.tree { height: 522px; border: 2px solid #363b40; border-radius: 8px; background: #0f1419; padding: 7px 9px; }
.tr { display: flex; align-items: center; height: 41.950px; padding: 0 9px 0 2px; }
.tc { width: 18px; height: 18px; color: #c9c9c9; margin-right: 11px; }
.tr span { margin-left: 18px; }
.tc ~ span { margin-left: 17px; }
.tr u { margin-left: auto; color: #656a6f; }
.kids { position: relative; }
.kids::before { content: ""; position: absolute; left: 13px; top: 4px; bottom: 4px; width: 2px; background: #2a3036; }
.kids .tr { padding-left: 57px; }
.tree > .leaf { padding-left: 30px; }
.kids .sel { background: #34577c; color: #dfe9f3; border-radius: 6px; height: 35px; margin: 3.500px 0; }
.kids .sel u { color: #86a0bb; }
.table { position: relative; flex: 1; overflow: hidden; color: #c6cacd; }
.th, .td { display: flex; height: 39px; line-height: 40px; background: #121a23; }
.td:nth-child(odd) { background: #19202a; }
.th { height: 42px; line-height: 42px; background: #1d252e; border-bottom: 2px solid #0b1016; }
.ix { width: 58px; padding-right: 6px; text-align: right; background: #1f262f; border-right: 2px solid #0b1016; }
.td:nth-child(odd) .ix { background: #232a34; }
.vals { display: flex; width: 351px; border-right: 2px solid #0b1016; }
.th .vals { display: block; text-align: center; padding-right: 4px; }
.vals s { width: 115.500px; text-align: right; }
.vals s:first-child { width: 111px; }
.fold { position: absolute; right: 2px; top: 35px; width: 9px; height: 16px; }
.sh-foot { display: flex; align-items: center; justify-content: flex-end; height: 48px; padding: 1px 17px 0 0; background: #16252f; color: #e3e6e8; flex: none; }
.sh-foot em { width: 2px; height: 25px; margin: 0 21px; background: #c5c9cc; }

/* node editor */
.nodes { grid-column: 1 / 3; background: #121a22; }
.ne-head { position: relative; z-index: 2; display: flex; align-items: center; height: 49px; padding: 3px 0 0 14px; background: #1c2933; flex: none; }
.ne-type { width: 61px; gap: 2px; }
.ne-mode { width: 130px; margin-left: 10px; justify-content: space-between; padding: 0 4px 0 15px; }
.ne-menu { display: flex; gap: 30px; margin-left: 24px; width: 259px; white-space: nowrap; color: #ccd2d6; }
.ne-menu span { width: 42px; }
.idblock { display: flex; height: 37px; margin-left: 556px; }
.id-type { width: 60px; height: 37px; gap: 2px; border-radius: 7px 0 0 7px; }
.id-name { width: 154px; line-height: 36px; padding-left: 15px; background: #080c13; color: #f0f2f4; }
.id-fake { width: 40px; display: flex; align-items: center; justify-content: center; }
.id-btn { width: 37px; margin-right: 2px; background: #05080d; display: flex; align-items: center; justify-content: center; }
.id-btn.last { border-radius: 0 7px 7px 0; margin-right: 0; }
.ne-pin { margin-left: 17px; }
.up { width: 35px; margin-left: 735px; background: #18222b; }
.ne-mag { margin-left: 14px; }
.ne-snap { width: 61px; margin-left: 5px; gap: 8px; border-radius: 0 7px 7px 0; }
.ne-over { width: 35px; margin-left: 12px; background: #27456f; border-radius: 7px 0 0 7px; }
.ne-drop { width: 40px; border-radius: 0 7px 7px 0; padding-right: 3px; }
.ne-fun { margin-left: 37px; margin-right: 18px; color: #dfe3e6; }
.ne-crumbs { position: relative; z-index: 1; display: flex; align-items: center; height: 88px; color: #e3e6e8; white-space: nowrap; }
.n-edge { width: 17px; height: 18px; margin-left: -5px; color: #9ea3a8; }
.n-o { margin-left: 23px; }
.n-a { margin-left: 17px; width: 63px; }
.n-s { margin: 0 15px 0 28px; }
.n-b { margin-left: 17px; width: 83.500px; }

.canvas { position: absolute; inset: 0; font-size: 19.700px; color: #dde2e6; }
.links { position: absolute; left: 0; top: 0; width: 2530px; height: 955px; }
.node { position: absolute; width: 250px; padding-bottom: 6.500px; border-radius: 8px; background: #1c2534; box-shadow: 0 0 0 1.500px #0b1118, 0 4px 14px 3px rgba(0,0,0,.42); }
.node h3 { display: flex; align-items: center; height: 37.200px; margin-bottom: 6.200px; padding-left: 18px; border-radius: 8px 8px 0 0; background: #1b222d; box-shadow: inset 0 -1.500px rgba(0,0,0,.25); font-size: inherit; }
.node h3 svg { width: 19px; height: 19px; margin-right: 9px; margin-top: -3px; }
.green h3 { background: #12655c; }
.red h3 { background: #68283f; }
.wine h3 { background: #4e2538; }
.node.n-input { left: 55.500px; top: 131.500px; }
.n-bezier { left: 350.500px; top: 165px; }
.n-resample { left: 836px; top: 104.500px; }
.node.n-resample { padding-bottom: 10.500px; }
.n-endpoint { left: 751.500px; top: 406px; }
.node.n-not { left: 1036px; top: 375.500px; width: 253px; padding-bottom: 12.500px; background: #1d273a; box-shadow: inset 0 0 0 2px #4263b3, 0 4px 14px 3px rgba(0,0,0,.42); }
.n-not h3 { height: 38px; margin-bottom: 7px; padding-left: 20px; background: #1f3872; box-shadow: inset 0 2px #4263b3, inset 2px 0 #4263b3, inset -2px 0 #4263b3; }
.n-not .row { padding-left: 21px; height: 38.700px; }
.n-ico { left: 871px; top: 635px; }
.n-inst { left: 1394px; top: 305.500px; }
.n-viewer { left: 2192px; top: 336px; }
.node h3 .eye { width: 25px; height: 19px; margin: 0 15px 0 auto; }
.row { position: relative; display: flex; align-items: center; height: 38.400px; padding: 0 19px; white-space: nowrap; }
.row.out { justify-content: flex-end; padding-right: 21px; }
.g6 { margin-top: 5.800px; }
.g10 { margin-top: 9.800px; }
.n-viewer .g4 { top: 3px; margin-bottom: 5px; }
.field, .drop { display: flex; flex: 1; align-items: center; justify-content: space-between; height: 36px; padding: 0 26px 0 28px; background: #0e131d; border-radius: 4px; }
.drop { height: 33px; margin-right: 1px; padding: 0 1px 0 13px; background: #03060a; border-radius: 6px; box-shadow: 0 1px 3px rgba(0,0,0,.4); }
.drop .cv { width: 16px; height: 16px; }
.toggle span { flex: 1; height: 35px; line-height: 34px; text-align: center; background: #0b0f15; border-radius: 0 6px 6px 0; }
.toggle .on { flex: none; width: 105px; background: #183149; border-radius: 6px 0 0 6px; }
.vector { height: 107.800px; margin: 0 19px 0 18px; padding: 0 26px 0 29px; background: #0e131d; border-radius: 5px; }
.vector p { display: flex; justify-content: space-between; height: 35.300px; line-height: 35.800px; }
.check { width: 23px; height: 24px; margin: 0 8px 0 -1px; background: #0e0e10; border-radius: 4px; box-shadow: 0 0 2px 1px #111a24; }
.c, .d { position: absolute; left: -8px; top: 11.200px; width: 16px; height: 16px; box-shadow: 0 0 0 1.800px #0b1118; }
.c { border-radius: 50%; }
.d { transform: rotate(45deg) scale(.85); }
.out .c, .out .d { left: auto; right: -8px; }
.n-not .out .d { right: -6px; }
.n-not .row:last-child .d { left: -7px; }
.dot::after { content: ""; position: absolute; left: 5.500px; top: 5.500px; width: 5px; height: 5px; border-radius: 50%; background: #131a24; }
.geo { background: #02d5a0; }
.int { background: #5d8f5d; }
.vec { background: #6463c7; }
.bool { background: #cfa6d8; }
.rot { background: #a463c7; }
.flt { background: #a3a3a3; }
.virt { background: #353738; box-shadow: 0 0 0 2px #83878b; }
.node.n-join { left: 1786px; top: 150px; width: 249px; height: 55px; display: flex; align-items: center; padding: 0 16px 0 20px; border-radius: 27px; background: #12655c; }
.n-join svg { width: 20px; height: 20px; margin-right: 4px; }
.n-join em { width: 9px; height: 15px; margin-left: auto; border: solid #4b8d86; border-width: 0 2px; }
.n-join .c { top: 19px; }
.n-join .l { left: -9px; width: 17px; height: 18px; }
.n-join .r { left: auto; right: -7px; }
.mark { position: absolute; left: 1018px; top: 354px; width: 285px; height: 223px; border: 4px solid #f01604; }
.fold2 { position: absolute; right: 2px; top: 84px; width: 9px; height: 17px; }
.vbar { position: absolute; right: 3px; top: 115px; width: 8px; height: 815px; border-radius: 4px; background: #1b222a; }
.hbar { position: absolute; left: 15px; top: 948px; width: 2084px; height: 6px; border-radius: 3px; background: #1f272f; }
```
